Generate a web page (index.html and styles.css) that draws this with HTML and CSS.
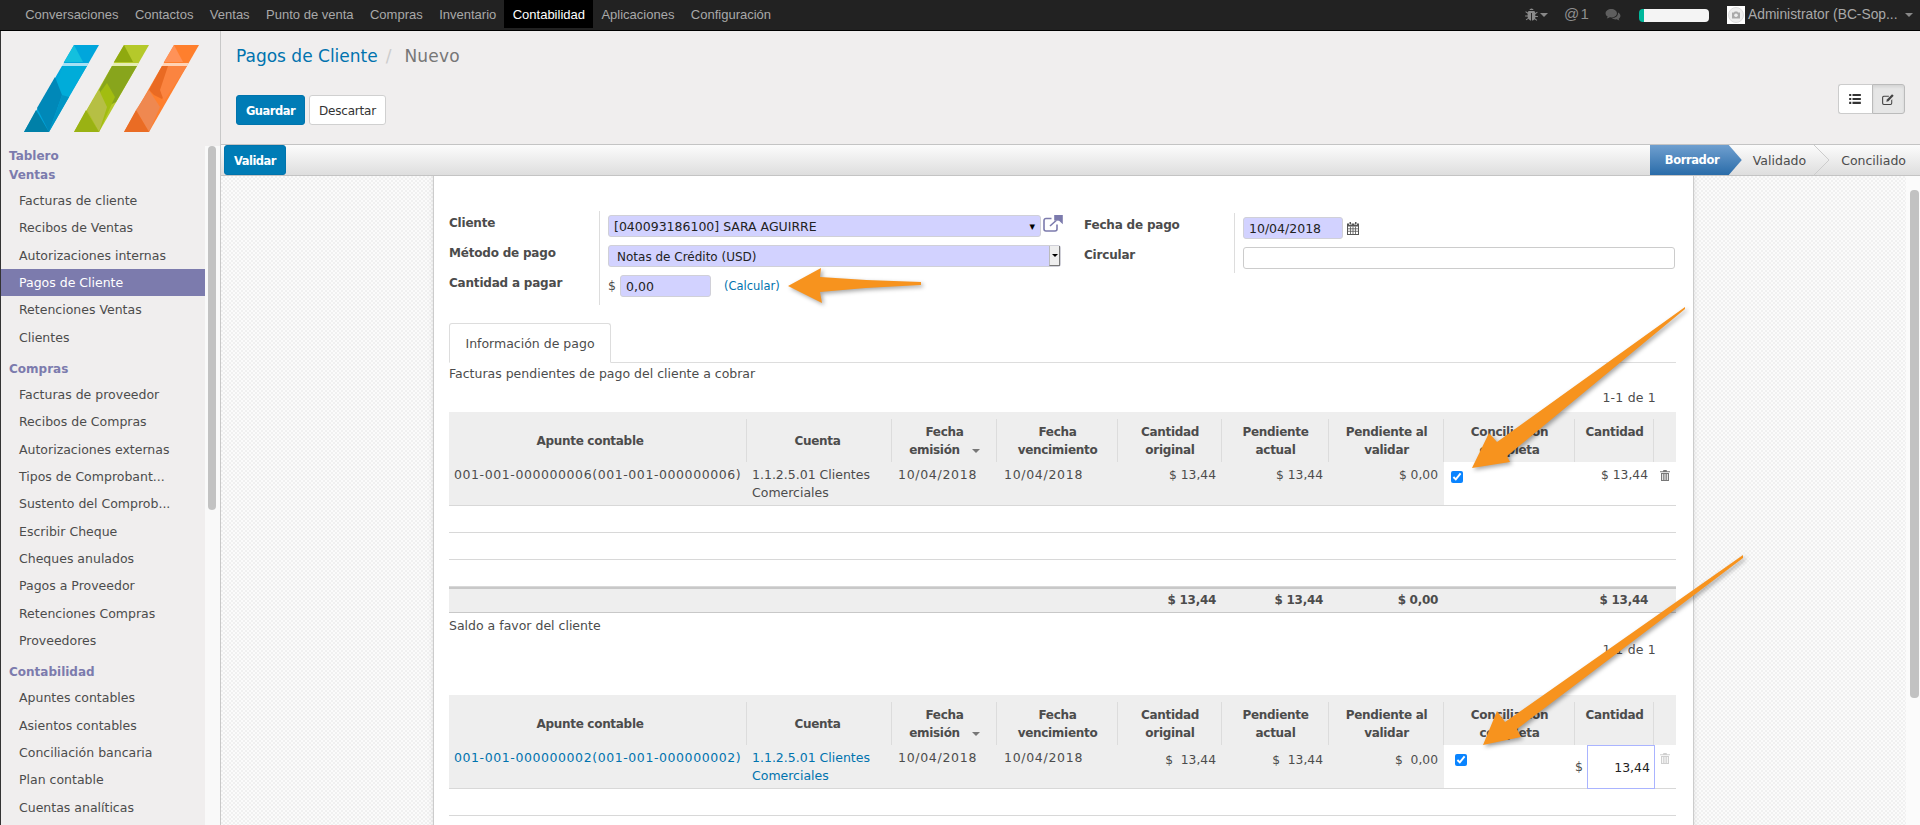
FILE: index.html
```html
<!DOCTYPE html>
<html lang="es">
<head>
<meta charset="utf-8">
<title>Pagos de Cliente</title>
<link rel="stylesheet" href="styles.css">
</head>
<body>
<div class="app">
  <header class="topbar">
    <nav class="menu">
      <a>Conversaciones</a><a>Contactos</a><a>Ventas</a><a>Punto de venta</a><a>Compras</a><a>Inventario</a><a class="on">Contabilidad</a><a>Aplicaciones</a><a>Configuración</a>
    </nav>
    <div class="tray">
      <svg class="t-bug" viewBox="0 0 16 16"><path d="M8 1.5a2.4 2.4 0 0 1 2.3 1.8H5.7A2.4 2.4 0 0 1 8 1.5zM5 4.2h6c.6.7.9 1.4 1 2.1l2-1.3.6.9-2.5 1.7v1.9h2.7v1.1h-2.7c0 .6-.1 1-.3 1.5l2.3 1.7-.6.9-2.2-1.6C10.500 13.800 9.400 14.500 8.500 14.500V6.500h-1v8c-.9 0-2-.7-2.800-1.900L2.500 14.200l-.6-.9 2.300-1.700c-.2-.5-.3-.9-.3-1.500H1.200V9h2.700V7.100L1.400 5.400 2 4.500l2 1.300c.1-.6.4-1 1-1.600z"/></svg>
      <span class="caret t-c1"></span>
      <span class="t-at">@ 1</span>
      <svg class="t-chat" viewBox="0 0 18 16"><path d="M7 1c3.600 0 6.500 2.200 6.500 4.900S10.600 10.800 7 10.800c-.6 0-1.200-.1-1.700-.2C4.400 11.300 3.200 11.800 1.800 12c.6-.7 1-1.400 1.100-2.200C1.400 8.900.5 7.500.5 5.900.5 3.200 3.400 1 7 1zM14.700 5c1.700.8 2.800 2.200 2.800 3.800 0 1.400-.8 2.600-2 3.400.1.800.5 1.400 1 2-1.300-.2-2.300-.7-3.100-1.300-.5.100-.9.100-1.400.1-1.800 0-3.400-.6-4.400-1.500 4 0 7.400-2.400 7.100-6.500z"/></svg>
      <span class="t-bar"></span>
      <span class="t-avatar"><svg viewBox="0 0 18 18"><circle cx="9" cy="9" r="7.500" fill="#eee" stroke="#ddd"/><path d="M5 6.500h2l.7-1h2.600l.7 1h2v6H5z" fill="#aaa"/><circle cx="9" cy="9.300" r="1.800" fill="#eee"/></svg></span>
      <span class="t-name">Administrator (BC-Sop...</span>
      <span class="caret t-c2"></span>
    </div>
  </header>

  <div class="layout">
    <aside class="sidebar">
      <div class="logo">
        <svg width="175" height="87" viewBox="0 0 175 87">
          <g>
            <polygon points="50,0 75,0 25,87 0,87" fill="#00a6dc"/>
            <polygon points="50,0 40,17 59,17" fill="#13c0de"/>
            <polygon points="39,21 63,21 38,63 31,40" fill="#00acd9"/>
            <polygon points="31,32 13,63 25,87 38,50" fill="#0088b8"/>
            <polygon points="38,50 45,52 25,87" fill="#0095c4"/>
            <polygon points="0,87 25,87 12,65" fill="#0080a8"/>
            <polygon class="band" points="39,18 64.500,18 63,21 37.500,21"/>
          </g>
          <g transform="translate(50 0)">
            <polygon points="50,0 75,0 25,87 0,87" fill="#b5c92a"/>
            <polygon points="50,0 40,17 59,17" fill="#8fa90f"/>
            <polygon points="38,21 63,21 42,57 32,62 25,45" fill="#88a51c"/>
            <polygon points="33,38 41,52 25,87 13,65" fill="#a2bd10"/>
            <polygon points="25,45 13,65 25,87 33,62" fill="#b6bf44"/>
            <polygon points="0,87 25,87 12,65" fill="#9ab213"/>
            <polygon class="band" points="39,18 64.500,18 63,21 37.500,21"/>
          </g>
          <g transform="translate(100 0)">
            <polygon points="50,0 75,0 25,87 0,87" fill="#ff7f2d"/>
            <polygon points="50,0 40,17 59,17" fill="#ff9258"/>
            <polygon points="38,21 58,21 38,54 30,50 25,45" fill="#e96a23"/>
            <polygon points="44,21 63,21 40,56 36,45" fill="#fb8440"/>
            <polygon points="25,45 12,65 25,87 36,62" fill="#ef8850"/>
            <polygon points="0,87 25,87 12,65" fill="#ea6c24"/>
            <polygon class="band" points="39,18 64.500,18 63,21 37.500,21"/>
          </g>
        </svg>
      </div>
      <div class="side-scroll">
        <div class="side-list">
          <h4 class="side-head tight">Tablero</h4>
          <h4 class="side-head">Ventas</h4>
          <a class="side-item">Facturas de cliente</a>
          <a class="side-item">Recibos de Ventas</a>
          <a class="side-item">Autorizaciones internas</a>
          <a class="side-item active">Pagos de Cliente</a>
          <a class="side-item">Retenciones Ventas</a>
          <a class="side-item">Clientes</a>
          <h4 class="side-head group">Compras</h4>
          <a class="side-item">Facturas de proveedor</a>
          <a class="side-item">Recibos de Compras</a>
          <a class="side-item">Autorizaciones externas</a>
          <a class="side-item">Tipos de Comprobant...</a>
          <a class="side-item">Sustento del Comprob...</a>
          <a class="side-item">Escribir Cheque</a>
          <a class="side-item">Cheques anulados</a>
          <a class="side-item">Pagos a Proveedor</a>
          <a class="side-item">Retenciones Compras</a>
          <a class="side-item">Proveedores</a>
          <h4 class="side-head group">Contabilidad</h4>
          <a class="side-item">Apuntes contables</a>
          <a class="side-item">Asientos contables</a>
          <a class="side-item">Conciliación bancaria</a>
          <a class="side-item">Plan contable</a>
          <a class="side-item">Cuentas analíticas</a>
        </div>
        <div class="side-track"><span class="side-thumb"></span></div>
      </div>
    </aside>

    <main class="main">
      <section class="control">
        <div class="control-left">
          <h1 class="crumbs"><a>Pagos de Cliente</a><span class="sep">/</span><span class="cur">Nuevo</span></h1>
          <div class="actions">
            <button class="btn primary">Guardar</button>
            <button class="btn plain">Descartar</button>
          </div>
        </div>
        <div class="switch">
          <span class="sw"><svg width="12" height="10" viewBox="0 0 14 12"><path d="M0 0h2.500v2.500H0zM4 0h10v2.500H4zM0 4.700h2.500v2.500H0zM4 4.700h10v2.500H4zM0 9.400h2.500V12H0zM4 9.400h10V12H4z" fill="#333"/></svg></span>
          <span class="sw sel"><svg width="12" height="11" viewBox="0 0 14 13"><path d="M2 2h6v1.200H2.300a1 1 0 0 0-1 1v6.500a1 1 0 0 0 1 1h7.500a1 1 0 0 0 1-1V7.500L12 6.300v4.700a2 2 0 0 1-2 2H2a2 2 0 0 1-2-2V4a2 2 0 0 1 2-2z" fill="#444"/><path d="M11.800.3l1.900 1.900L7.500 8.500 5 9.200l.7-2.600z" fill="#444"/></svg></span>
        </div>
      </section>

      <section class="statusbar">
        <button class="btn primary validar">Validar</button>
        <div class="steps">
          <span class="step-current">Borrador</span>
          <span class="step">Validado</span>
          <svg class="chev" width="17" height="30" viewBox="0 0 17 30"><path d="M1 0l15 15L1 30" fill="none" stroke="#ccc"/></svg>
          <span class="step">Conciliado</span>
        </div>
      </section>

      <section class="content">
        <div class="sheet-area">
          <div class="sheet">
            <div class="form">
              <div class="group g-left">
                <div class="labels">
                  <label>Cliente</label>
                  <label>Método de pago</label>
                  <label>Cantidad a pagar</label>
                </div>
                <div class="fields f-left">
                  <div class="line">
                    <div class="input req w-client">[040093186100] SARA AGUIRRE<span class="drop">▾</span></div>
                    <svg class="ext" width="20" height="17" viewBox="0 0 20 17"><path d="M8.500 3.500H3a2 2 0 0 0-2 2V14a2 2 0 0 0 2 2h9a2 2 0 0 0 2-2V9.500" fill="none" stroke="#7c7bad" stroke-width="1.600"/><path d="M7 11L16 3M12 .8h7v6.500l-2.600-2.400-4.400-.200z" fill="#7c7bad" stroke="#7c7bad" stroke-width="1.600"/></svg>
                  </div>
                  <div class="line">
                    <div class="input req w-method">Notas de Crédito (USD)<span class="selbtn"><i class="selcaret"></i></span></div>
                  </div>
                  <div class="line">
                    <span class="cur-sign">$</span>
                    <div class="input req w-amount">0,00</div>
                    <a class="link calc">(Calcular)</a>
                  </div>
                </div>
              </div>
              <div class="group g-right">
                <div class="labels">
                  <label>Fecha de pago</label>
                  <label>Circular</label>
                </div>
                <div class="fields f-right">
                  <div class="line">
                    <div class="input req w-date">10/04/2018</div>
                    <svg class="cal" width="12" height="13" viewBox="0 0 12 13"><path d="M2.500 0h1.500v2.500H2.500zM8 0h1.500v2.500H8zM0 1.500h2v1.500h2.500V1.500h3V3H10V1.500h2V13H0zM1 4.500V12h10V4.500z" fill="#555"/><path d="M1 6.800h10M1 9.300h10M3.500 4.500V12M6 4.500V12M8.500 4.500V12" stroke="#555" stroke-width=".8"/></svg>
                  </div>
                  <div class="line"><div class="input w-circ"></div></div>
                </div>
              </div>
            </div>

            <div class="tabs"><span class="tab">Información de pago</span></div>

            <p class="caption first">Facturas pendientes de pago del cliente a cobrar</p>
            <p class="pager">1-1 de 1</p>
            <table class="grid">
              <colgroup><col class="c1"><col class="c2"><col class="c3"><col class="c4"><col class="c5"><col class="c6"><col class="c7"><col class="c8"><col class="c9"><col class="c10"></colgroup>
              <thead>
                <tr>
                  <th class="h-apunte">Apunte contable</th><th class="h-cuenta">Cuenta</th><th>Fecha<br>emisión<i class="sort"></i></th><th>Fecha<br>vencimiento</th><th class="ttop">Cantidad<br>original</th><th class="ttop">Pendiente<br>actual</th><th class="ttop">Pendiente al<br>validar</th><th class="ttop">Conciliación<br>completa</th><th class="ttop">Cantidad</th><th class="ttop nodiv"></th>
                </tr>
              </thead>
              <tbody>
                <tr class="row">
                  <td class="code">001-001-000000006(001-001-000000006)</td><td class="pl5">1.1.2.5.01 Clientes Comerciales</td><td class="pl6 date">10/04/2018</td><td class="pl7 date">10/04/2018</td><td class="num">$ 13,44</td><td class="num">$ 13,44</td><td class="num">$ 0,00</td>
                  <td class="blank"><input class="chk chk1" type="checkbox" checked></td><td class="blank num">$ 13,44</td>
                  <td class="blank"><svg class="trash" width="10" height="11" viewBox="0 0 10 11"><path d="M3.500 0h3l.6 1.200H10v1.100H0V1.200h2.900zM1 3h8v8H1zM2.200 4v6h1V4zM4.500 4v6h1V4zM6.800 4v6h1V4z" fill-rule="evenodd" fill="#777"/></svg></td>
                </tr>
                <tr class="empty"><td colspan="10"></td></tr>
                <tr class="empty"><td colspan="10"></td></tr>
                <tr class="empty"><td colspan="10"></td></tr>
              </tbody>
              <tfoot>
                <tr><td colspan="4"></td><td class="num">$ 13,44</td><td class="num">$ 13,44</td><td class="num">$ 0,00</td><td></td><td class="num">$ 13,44</td><td></td></tr>
              </tfoot>
            </table>

            <p class="caption">Saldo a favor del cliente</p>
            <p class="pager">1-1 de 1</p>
            <table class="grid second">
              <colgroup><col class="c1"><col class="c2"><col class="c3"><col class="c4"><col class="c5"><col class="c6"><col class="c7"><col class="c8"><col class="c9"><col class="c10"></colgroup>
              <thead>
                <tr>
                  <th class="h-apunte">Apunte contable</th><th class="h-cuenta">Cuenta</th><th>Fecha<br>emisión<i class="sort"></i></th><th>Fecha<br>vencimiento</th><th class="ttop">Cantidad<br>original</th><th class="ttop">Pendiente<br>actual</th><th class="ttop">Pendiente al<br>validar</th><th class="ttop">Conciliación<br>completa</th><th class="ttop">Cantidad</th><th class="ttop nodiv"></th>
                </tr>
              </thead>
              <tbody>
                <tr class="row">
                  <td class="link code">001-001-000000002(001-001-000000002)</td><td class="pl5 link">1.1.2.5.01 Clientes Comerciales</td><td class="pl6 date">10/04/2018</td><td class="pl7 date">10/04/2018</td><td class="num low">$&nbsp;&nbsp;13,44</td><td class="num low">$&nbsp;&nbsp;13,44</td><td class="num low">$&nbsp;&nbsp;0,00</td>
                  <td class="blank"><input class="chk chk2" type="checkbox" checked></td>
                  <td class="blank amount-cell"><div class="amount"><span class="amount-sign">$</span><span class="amount-box">13,44</span></div></td>
                  <td class="blank"><svg class="trash faded" width="10" height="11" viewBox="0 0 10 11"><path d="M3.500 0h3l.6 1.200H10v1.100H0V1.200h2.900zM1 3h8v8H1zM2.200 4v6h1V4zM4.500 4v6h1V4zM6.800 4v6h1V4z" fill-rule="evenodd" fill="#777"/></svg></td>
                </tr>
                <tr class="empty"><td colspan="10"></td></tr>
              </tbody>
            </table>
          </div>
        </div>
        <div class="main-track"><span class="main-thumb"></span></div>
      </section>
    </main>
  </div>

  <svg class="callouts" width="1920" height="825" viewBox="0 0 1920 825">
    <path d="M788 286L821 268 820 277Q870 281 921 282L921 285Q870 287 820 292L822 303Z"/>
    <path d="M1685 307L1497 442 1489 433 1472 468 1510 462 1507 456 1685 309Z"/>
    <path d="M1743 555L1505 722 1497 711 1483 745 1521 737 1517 729 1743 558Z"/>
  </svg>
</div>
</body>
</html>
```
FILE: styles.css
```css
* { box-sizing: border-box; }
html, body { margin: 0; padding: 0; height: 100%; overflow: hidden; }
body { font: 12.500px/18px "DejaVu Sans", sans-serif; color: #4c4c4c; background: #f0eeee; }
h1, h4, p { margin: 0; font-weight: normal; }
a { text-decoration: none; }

.app { position: relative; height: 825px; display: flex; flex-direction: column; }

/* top bar */
.topbar { height: 31px; flex: none; display: flex; justify-content: space-between; background: #222; border-bottom: 1px solid #000; font-family: "Liberation Sans", sans-serif; font-size: 13px; color: #a9a9a9; }
.menu { display: flex; padding-left: 17px; height: 28px; }
.menu a { padding: 0 8.230px; line-height: 29px; color: #a9a9a9; }
.menu a.on { background: #000; color: #fff; }
.tray { display: flex; align-items: center; height: 30px; padding-right: 7px; fill: #777; }
.t-bug { width: 15px; height: 15px; fill: #8a8a8a; margin-right: 1px; margin-top: -2px; }
.caret { width: 0; height: 0; border-left: 4px solid transparent; border-right: 4px solid transparent; border-top: 4px solid #888; }
.t-c1 { margin: 0 16px 0 0; }
.t-at { font-size: 15px; color: #8f8f8f; margin-right: 17px; width: 24px; white-space: nowrap; margin-top: -3px; word-spacing: -3px; }
.t-chat { width: 16px; height: 14px; fill: #5e5e5e; margin-right: 18px; }
.t-bar { width: 70px; height: 13px; border-radius: 4px; background: linear-gradient(90deg, #00b89c 5px, #f4f4f4 5px); margin-right: 18px; }
.t-avatar { width: 18px; height: 18px; background: #fff; margin-right: 3px; display: flex; }
.t-name { width: 157px; font-size: 13.800px; color: #a9a9a9; white-space: nowrap; }

.layout { flex: 1; min-height: 0; display: flex; }

/* sidebar */
.sidebar { width: 221px; flex: none; display: flex; flex-direction: column; background: #f0eeee; border-left: 1px solid #333; border-right: 1px solid #c8c8c8; }
.logo { height: 115px; flex: none; padding: 14px 0 0 23px; }
.logo svg { display: block; }
.band { fill: #fff; opacity: .65; }
.side-scroll { flex: 1; min-height: 0; display: flex; overflow: hidden; }
.side-list { width: 204px; flex: none; }
.side-head { height: 19px; line-height: 21px; padding-left: 8px; margin-bottom: 3px; font-size: 12px; font-weight: bold; color: #7c7bad; }
.side-head.tight { margin-bottom: 0; }
.side-head.group { margin-top: 8px; }
.side-item { display: block; height: 27.330px; line-height: 28px; padding-left: 18px; color: #4c4c4c; white-space: nowrap; }
.side-item.active { background: #7c7bad; color: #fff; }
.side-track { flex: 1; background: #f9f9f9; position: relative; }
.side-thumb { position: absolute; left: 3px; top: 0; width: 8px; height: 364px; border-radius: 4px; background: #c2c2c2; }

/* main */
.main { flex: 1; min-width: 0; display: flex; flex-direction: column; }
.control { height: 113px; flex: none; display: flex; justify-content: space-between; padding: 12px 15px 0 15px; }
.crumbs { font-size: 17px; line-height: 26px; height: 24px; white-space: nowrap; }
.crumbs a { color: #0073ae; }
.sep { color: #ccc; margin: 0 13px 0 8px; }
.cur { color: #777; letter-spacing: .2px; }
.actions { margin-top: 28px; display: flex; gap: 4px; }
.btn { height: 30px; padding: 2px 0 0; font: 12px "DejaVu Sans", sans-serif; border-radius: 3px; }
.primary { width: 69px; border: 1px solid #0074ad; background: #007cb6; color: #fff; font-weight: bold; font-size: 11.500px; letter-spacing: -.5px; }
.plain { width: 77px; border: 1px solid #d0d0d0; background: #fff; color: #333; letter-spacing: -.2px; }
.switch { display: flex; height: 30px; margin-top: 41px; }
.sw { width: 33.500px; display: flex; align-items: center; justify-content: center; border: 1px solid #ccc; background: #fff; }
.sw:first-child { border-radius: 3px 0 0 3px; border-right: 0; }
.sw.sel { background: #e6e6e6; border-radius: 0 3px 3px 0; border-color: #bbb; box-shadow: inset 0 2px 3px rgba(0,0,0,.08); }

.statusbar { height: 32px; flex: none; display: flex; align-items: center; justify-content: space-between; padding: 0 14px 0 3px; border-top: 1px solid #c4c4c4; border-bottom: 1px solid #c4c4c4; background: linear-gradient(#fcfcfc, #dedede); }
.validar { width: 62px; height: 30px; }
.steps { display: flex; align-items: center; height: 30px; color: #4c4c4c; }
.step { line-height: 31px; }
.step-current { width: 92px; height: 30px; line-height: 31px; padding-left: 15px; margin-right: 11px; color: #fff; font-weight: bold; font-size: 11.500px; letter-spacing: -.4px; background: linear-gradient(#6f9fcf, #2a6ca9); clip-path: polygon(0 0, 79px 0, 92px 50%, 79px 100%, 0 100%); }
.chev { margin: 0 11px 0 7px; }

/* content */
.content { flex: 1; min-height: 0; display: flex; overflow: hidden; background: #fff; }
.sheet-area { flex: 1; min-width: 0; display: flex; justify-content: center; overflow: hidden; background-color: #fbfbfb; background-image: conic-gradient(#f0f0f0 25%, #fbfbfb 0 50%, #f0f0f0 0 75%, #fbfbfb 0); background-size: 4px 4px; }
.sheet { width: 1261px; height: 700px; flex: none; padding: 35px 17px 0 15px; background: #fff; border-left: 1px solid #ccc; border-right: 1px solid #ccc; box-shadow: 0 0 5px rgba(0,0,0,.1); }
.main-track { width: 14px; flex: none; position: relative; background: #fbfbfb; }
.main-thumb { position: absolute; left: 4px; top: 14px; width: 9px; height: 508px; border-radius: 4px; background: #c2c2c2; }

.form { display: flex; height: 94px; }
.group { display: flex; }
.g-left { width: 635px; }
.g-right { margin-top: 2px; height: 60px; }
.labels { width: 151px; border-right: 1px solid #ddd; display: flex; flex-direction: column; gap: 8px; }
.labels label { height: 22px; line-height: 24px; font-size: 12px; letter-spacing: -.2px; font-weight: bold; white-space: nowrap; }
.fields { padding: 4px 0 0 8px; display: flex; flex-direction: column; gap: 8px; }
.line { display: flex; align-items: center; height: 22px; }
.input { height: 22px; line-height: 21px; padding: 0 5px; border: 1px solid #d0d0d8; border-radius: 3px; background: #fff; color: #222; white-space: nowrap; position: relative; }
.req { background: #d2d2ff; }
.w-client { width: 433px; display: flex; justify-content: space-between; }
.drop { font-size: 11px; color: #000; }
.ext { margin-left: 2px; margin-top: -6px; }
.w-method { width: 453px; padding-left: 8px; display: flex; justify-content: space-between; padding-right: 0; font-size: 12px; line-height: 23px; }
.selbtn { width: 11px; height: 20px; background: #eee; border-left: 1px solid #bbb; border-right: 1px solid #777; border-bottom: 1px solid #777; display: flex; align-items: center; justify-content: center; }
.selcaret { width: 0; height: 0; border-left: 3px solid transparent; border-right: 3px solid transparent; border-top: 3px solid #000; }
.cur-sign { width: 12px; }
.w-amount { width: 91px; }
.calc { margin-left: 13px; font-size: 11.500px; }
.link { color: #0073ae; }
.w-date { width: 100px; }
.cal { margin-left: 4px; }
.w-circ { width: 432px; border-color: #ccc; }

.tabs { margin-top: 18px; height: 40px; border-bottom: 1px solid #ddd; }
.tab { display: block; width: 162px; height: 40px; line-height: 40px; text-align: center; white-space: nowrap; background: #fff; border: 1px solid #ddd; border-bottom-color: #fff; border-radius: 3px 3px 0 0; }

.caption { height: 20px; line-height: 20px; margin-top: 3px; white-space: nowrap; }
.caption.first { margin-top: 1px; }
.pager { height: 20px; line-height: 20px; margin: 4px 20px 4px 0; text-align: right; letter-spacing: .2px; }
.second { margin-top: 35px; }

/* tables */
.grid { width: 1227px; table-layout: fixed; border-collapse: separate; border-spacing: 0; }
.c1 { width: 298px; } .c2 { width: 145px; } .c3 { width: 105px; } .c4 { width: 121px; } .c5 { width: 104px; }
.c6 { width: 107px; } .c7 { width: 115px; } .c8 { width: 131px; } .c9 { width: 79px; } .c10 { width: 22px; }
.grid th { height: 50px; padding: 11px 4px 3px; background: #eee linear-gradient(#dcdcdc, #dcdcdc) no-repeat right 0 bottom 0 / 1px 43px; font-size: 12px; font-weight: bold; letter-spacing: -.3px; text-align: center; line-height: 18px; white-space: nowrap; vertical-align: middle; }
.grid th.ttop { vertical-align: top; }
.grid th.nodiv { background-image: none; }
.grid th.h-apunte { padding-right: 20px; }
.grid th.h-cuenta { padding-right: 8px; }
.sort { display: inline-block; width: 0; height: 0; margin-left: 12px; vertical-align: middle; border-left: 4px solid transparent; border-right: 4px solid transparent; border-top: 4px solid #777; }
.grid td { padding: 0 5px; background: #eee; vertical-align: top; border-bottom: 1px solid #d8d8d8; }
.row td { height: 44px; padding-top: 4px; line-height: 18px; }
.empty td { height: 27px; background: #fff; }
.grid tfoot td { height: 26px; padding-top: 2px; border-top: 2px solid #c8c8c8; border-bottom: 1px solid #c8c8c8; font-size: 12px; font-weight: bold; letter-spacing: -.3px; line-height: 18px; }
.grid td.pl5 { padding-left: 5px; }
.grid td.pl6 { padding-left: 6px; }
.grid td.pl7 { padding-left: 7px; }
.code { letter-spacing: .58px; white-space: nowrap; }
.date { letter-spacing: .7px; white-space: nowrap; }
.grid td.num { text-align: right; white-space: nowrap; font-size: 12.300px; padding-right: 6px; }
.grid tfoot td.num { font-size: 12px; }
.grid td.low { padding-top: 6px; }
.grid td.blank { background: #fff; }
.chk { display: block; width: 12px; height: 12px; margin: 0; accent-color: #0a84ff; }
.chk1 { margin: 5px 0 0 2px; }
.chk2 { margin: 5px 0 0 6px; }
.trash { display: block; margin: 4px 0 0 1px; }
.faded { opacity: .35; }
.grid td.amount-cell { padding: 0; }
.amount { display: flex; height: 43px; width: 80px; }
.amount-sign { width: 12px; padding-top: 13px; }
.amount-box { width: 68px; height: 44px; padding: 13px 4px 0 0; text-align: right; color: #222; background: #fff; border: 1px solid #aab4ff; }

.callouts { position: absolute; left: 0; top: 0; pointer-events: none; fill: #f7931e; filter: drop-shadow(2px 2px 2px rgba(0,0,0,.35)); }
```
